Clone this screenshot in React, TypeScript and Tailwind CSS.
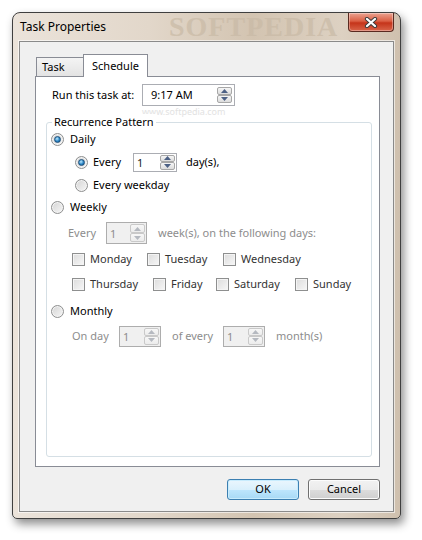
import React from "react";

const FONT = { fontFamily: "'Noto Sans', 'Open Sans', sans-serif" };

function Radio({ checked }: { checked?: boolean }) {
  return (
    <span className="relative inline-flex h-[13px] w-[13px] shrink-0 items-center justify-center rounded-full border border-[#8e8f8f] bg-[linear-gradient(135deg,#d4d4d4,#f6f6f6)] shadow-[inset_0_0_0_1px_#f4f4f4]">
      {checked && (
        <span className="h-[7px] w-[7px] rounded-full border border-[#1d4f7a] bg-[radial-gradient(circle_at_40%_35%,#bde9ff,#2b86c5_55%,#0c4b82)]" />
      )}
    </span>
  );
}

function Check() {
  return (
    <span className="inline-block h-[13px] w-[13px] shrink-0 border border-[#8e8f8f] bg-[linear-gradient(135deg,#dcdcdc,#f7f7f7)] shadow-[inset_0_0_0_1px_#f4f4f4]" />
  );
}

function Arrow({ up, disabled }: { up?: boolean; disabled?: boolean }) {
  return (
    <svg width="7" height="4" viewBox="0 0 7 4">
      <path
        d={up ? "M0 4 L3.5 0 L7 4 Z" : "M0 0 L3.5 4 L7 0 Z"}
        fill={disabled ? "#b5b9c0" : "#4d6185"}
      />
    </svg>
  );
}

function Spinner({ disabled }: { disabled?: boolean }) {
  const half = disabled
    ? "flex flex-1 items-center justify-center rounded-[2px] border border-[#c9c9c9] bg-[linear-gradient(#f7f7f7,#ececec)]"
    : "flex flex-1 items-center justify-center rounded-[2px] border border-[#a7a7a7] bg-[linear-gradient(#f6f6f6,#dcdcdc)]";
  return (
    <div className="ml-auto flex h-full w-[15px] flex-col gap-0">
      <div className={half}>
        <Arrow up disabled={disabled} />
      </div>
      <div className={half}>
        <Arrow disabled={disabled} />
      </div>
    </div>
  );
}

function NumBox({ w, h, disabled }: { w: string; h: string; disabled?: boolean }) {
  return (
    <div
      className={`flex ${w} ${h} shrink-0 items-center border p-[1px] ${
        disabled ? "border-[#adadad] bg-[#f0f0f0] text-[#8d8d8d]" : "border-[#abadb3] bg-white text-[#1a1a1a]"
      }`}
    >
      <span className="pl-[2px] leading-none">1</span>
      <Spinner disabled={disabled} />
    </div>
  );
}

function Day({ w, label }: { w: string; label: string }) {
  return (
    <div className={`flex ${w} shrink-0 items-center gap-[5px]`}>
      <Check />
      <span className="text-[#333]">{label}</span>
    </div>
  );
}

export default function App() {
  return (
    <div className="h-[540px] w-[422px] overflow-hidden bg-white pl-[12px] pt-[12px] text-[11px] text-black" style={FONT}>
      <div className="relative flex h-[507px] w-[389px] flex-col rounded-b-[5px] rounded-t-[8px] border border-[#3f3f3f] bg-[linear-gradient(90deg,#ebe3da,#e2d7ca_35%,#d3c4b1_62%,#ddd1c2_85%,#cfc0ae)] px-[6px] pb-[6px] shadow-[3px_5px_10px_rgba(0,0,0,0.45)]">
        {/* title bar */}
        <div className="relative flex h-[28px] items-center pl-[1px]">
          <span
            className="pointer-events-none absolute left-[150px] top-0 text-[28px] font-bold leading-[28px] tracking-[1px] text-[#c9baa6] opacity-70"
            style={{ fontFamily: "'Liberation Serif', serif" }}
          >
            SOFTPEDIA
          </span>
          <span className="relative text-[12px] text-black">Task Properties</span>
        </div>
        {/* close button */}
        <div className="absolute right-[6px] top-0 flex h-[19px] w-[46px] items-center justify-center rounded-b-[4px] border border-t-0 border-[#5a2a20] bg-[linear-gradient(#eba391,#db5f44_45%,#c5341a_55%,#d9654a)] shadow-[inset_0_0_0_1px_rgba(255,255,255,0.35)]">
          <svg width="14" height="11" viewBox="0 0 14 11">
            <path d="M3 2 L11 9 M11 2 L3 9" stroke="#3b3b3b" strokeWidth="4.2" strokeLinecap="round" />
            <path d="M3 2 L11 9 M11 2 L3 9" stroke="#ffffff" strokeWidth="2.3" strokeLinecap="round" />
          </svg>
        </div>
        {/* client */}
        <div className="h-[471px] border border-[#8a8a8a] bg-[#f0f0f0] pl-[15px] pt-[12px] shadow-[0_0_0_1px_rgba(255,255,255,0.6)]">
          <div className="w-[345px]">
            {/* tabs */}
            <div className="flex h-[22px] items-end">
              <div className="ml-[1px] flex h-[19px] w-[47px] items-center border border-b-0 border-r-0 border-[#898c95] bg-[linear-gradient(#f4f4f4,#e3e3e3)] pl-[5px]">
                Task
              </div>
              <div className="relative z-10 -mb-px flex h-[23px] w-[65px] items-center justify-center border border-b-0 border-[#898c95] bg-white">
                Schedule
              </div>
            </div>
            {/* panel */}
            <div className="relative h-[391px] border border-[#898c95] bg-white">
              <span className="pointer-events-none absolute left-[106px] top-[28px] text-[9px] text-[#e2e2e2]">
                www.softpedia.com
              </span>
              <div className="relative mt-[7px] flex items-center pl-[16px]">
                <span className="w-[90px] shrink-0">Run this task at:</span>
                <div className="flex h-[22px] w-[93px] items-center border border-[#abadb3] bg-white p-[2px]">
                  <span className="pl-[6px]">9:17 AM</span>
                  <Spinner />
                </div>
              </div>

              {/* group box */}
              <div className="relative ml-[10px] mt-[16px] h-[335px] w-[326px] rounded-[3px] border border-[#d5dfe5]">
                <span className="absolute left-[5px] top-[-9px] bg-white px-[2px] leading-[16px]">Recurrence Pattern</span>

                <div className="mt-[6px] flex h-[20px] items-center gap-[6px] pl-[4px]">
                  <Radio checked />
                  <span>Daily</span>
                </div>
                <div className="mt-[3px] flex h-[20px] items-center pl-[28px]">
                  <Radio checked />
                  <span className="ml-[5px] w-[40px]">Every</span>
                  <NumBox w="w-[44px]" h="h-[19px]" />
                  <span className="ml-[9px]">day(s),</span>
                </div>
                <div className="mt-[3px] flex h-[20px] items-center gap-[5px] pl-[28px]">
                  <Radio />
                  <span>Every weekday</span>
                </div>
                <div className="mt-[2px] flex h-[20px] items-center gap-[6px] pl-[4px]">
                  <Radio />
                  <span>Weekly</span>
                </div>
                <div className="mt-[5px] flex h-[22px] items-center pl-[21px] text-[#8d8d8d]">
                  <span className="w-[38px]">Every</span>
                  <NumBox w="w-[41px]" h="h-[22px]" disabled />
                  <span className="ml-[11px]">week(s), on the following days:</span>
                </div>
                <div className="mt-[5px] flex h-[20px] items-center pl-[25px]">
                  <Day w="w-[75px]" label="Monday" />
                  <Day w="w-[76px]" label="Tuesday" />
                  <Day w="w-[90px]" label="Wednesday" />
                </div>
                <div className="mt-[5px] flex h-[20px] items-center pl-[25px]">
                  <Day w="w-[81px]" label="Thursday" />
                  <Day w="w-[63px]" label="Friday" />
                  <Day w="w-[79px]" label="Saturday" />
                  <Day w="w-[60px]" label="Sunday" />
                </div>
                <div className="mt-[7px] flex h-[20px] items-center gap-[6px] pl-[4px]">
                  <Radio />
                  <span>Monthly</span>
                </div>
                <div className="mt-[4px] flex h-[22px] items-center pl-[25px] text-[#8d8d8d]">
                  <span className="w-[47px]">On day</span>
                  <NumBox w="w-[42px]" h="h-[21px]" disabled />
                  <span className="ml-[11px] w-[51px]">of every</span>
                  <NumBox w="w-[42px]" h="h-[21px]" disabled />
                  <span className="ml-[11px]">month(s)</span>
                </div>
              </div>
            </div>
            {/* buttons */}
            <div className="mt-[12px] flex justify-end gap-[9px]">
              <button className="flex h-[21px] w-[72px] items-center justify-center rounded-[3px] border border-[#3c7fb1] bg-[linear-gradient(#eaf6fd_0%,#d9f0fc_50%,#bee6fd_51%,#a7d9f5_100%)] shadow-[inset_0_0_0_1px_#c8ecfd]">
                OK
              </button>
              <button className="flex h-[21px] w-[72px] items-center justify-center rounded-[3px] border border-[#707070] bg-[linear-gradient(#f2f2f2_0%,#ebebeb_50%,#dddddd_51%,#cfcfcf_100%)] shadow-[inset_0_0_0_1px_#fcfcfc]">
                Cancel
              </button>
            </div>
          </div>
        </div>
      </div>
    </div>
  );
}
